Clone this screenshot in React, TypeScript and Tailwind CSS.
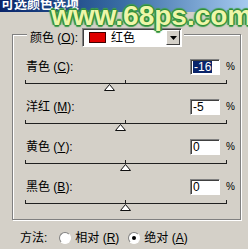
const rows = [
  { name: "青色", key: "C", value: -16, selected: true },
  { name: "洋红", key: "M", value: -5, selected: false },
  { name: "黄色", key: "Y", value: 0, selected: false },
  { name: "黑色", key: "B", value: 0, selected: false },
];

const font = "font-['Liberation_Sans','Noto_Sans_CJK_SC',sans-serif]";

function Slider({ value }: { value: number }) {
  // track runs 201px, -100..100
  const left = 100 + value;
  return (
    <div className="relative ml-[12px] mt-[8px] h-[16px] w-[202px]">
      <div className="h-px w-full bg-[#202020]" />
      <div className="absolute left-0 top-[-3px] h-[4px] w-px bg-[#202020]" />
      <div className="absolute left-[100px] top-[-3px] h-[4px] w-px bg-[#202020]" />
      <div className="absolute right-0 top-[-3px] h-[4px] w-px bg-[#202020]" />
      <svg
        className="absolute top-[1px]"
        style={{ left: left - 5 }}
        width="11"
        height="7"
        viewBox="0 0 11 7"
      >
        <path d="M5.5 0.5 L10.5 6.5 L0.5 6.5 Z" fill="#fff" stroke="#101010" strokeWidth="1" />
      </svg>
    </div>
  );
}

function Row({ name, keyChar, value, selected }: { name: string; keyChar: string; value: number; selected: boolean }) {
  return (
    <div className="flex h-[40px] flex-col">
      <div className="flex h-[16px] items-center">
        <span className="ml-[13px] text-[12px] leading-none text-black">
          {name} (<span className="underline">{keyChar}</span>):
        </span>
        <div className="ml-auto flex h-[16px] w-[30px] items-center border border-b-white border-l-[#808080] border-r-white border-t-[#808080] bg-white pl-[2px] shadow-[inset_1px_1px_0_#404040] text-[12px] leading-none">
          {selected ? (
            <span className="bg-[#0a246a] px-px text-white">{value}</span>
          ) : (
            <span className="text-black">{value}</span>
          )}
        </div>
        <span className="ml-[6px] mr-[5px] text-[10px] leading-none text-black">%</span>
      </div>
      <Slider value={value} />
    </div>
  );
}

export default function App() {
  return (
    <div className={`relative h-[249px] w-[248px] overflow-hidden bg-[#d4d0c8] ${font}`}>
      <div className="h-[12px] overflow-hidden bg-gradient-to-r from-[#0a246a] via-[#3a6ea5] to-[#a6caf0]">
        <div className="-mt-[3px] pl-[1px] text-[13px] font-bold leading-[14px] text-white">可选颜色选项</div>
      </div>

      <div className="ml-[12px] mt-[22px] h-[186px] w-[229px] border border-[#808080] shadow-[inset_1px_1px_0_#fff,1px_1px_0_#fff]">
        <div className="-mt-[7px] ml-[14px] flex w-fit items-center bg-[#d4d0c8] pl-[3px] pr-[2px]">
          <span className="text-[12px] leading-none text-black">
            颜色 (<span className="underline">O</span>):
          </span>
          <div className="ml-[4px] flex h-[19px] w-[100px] items-center border border-b-white border-l-[#808080] border-r-white border-t-[#808080] bg-white shadow-[inset_1px_1px_0_#404040]">
            <div className="ml-[6px] h-[11px] w-[17px] border border-[#400000] bg-[#e00000]" />
            <span className="ml-[5px] text-[12px] leading-none text-black">红色</span>
            <div className="ml-auto mr-px flex h-[15px] w-[14px] items-center justify-center border border-b-[#404040] border-l-white border-r-[#404040] border-t-white bg-[#d4d0c8]">
              <svg width="7" height="4" viewBox="0 0 7 4">
                <path d="M0 0 H7 L3.5 4 Z" fill="#000" />
              </svg>
            </div>
          </div>
        </div>

        <div className="mt-[12px] flex flex-col">
          {rows.map((r) => (
            <Row key={r.key} name={r.name} keyChar={r.key} value={r.value} selected={r.selected} />
          ))}
        </div>
      </div>

      <div className="ml-[20px] mt-[11px] flex h-[14px] items-center text-[12px] leading-none text-black">
        <span>方法:</span>
        <div className="ml-[12px] h-[12px] w-[12px] rounded-full border border-b-white border-l-[#808080] border-r-white border-t-[#808080] bg-white" />
        <span className="ml-[4px]">
          相对 (<span className="underline">R</span>)
        </span>
        <div className="ml-[9px] flex h-[12px] w-[12px] items-center justify-center rounded-full border border-b-white border-l-[#808080] border-r-white border-t-[#808080] bg-white">
          <div className="h-[4px] w-[4px] rounded-full bg-black" />
        </div>
        <span className="ml-[4px]">
          绝对 (<span className="underline">A</span>)
        </span>
      </div>

      {/* watermark over the dialog */}
      <div className="pointer-events-none absolute left-[51px] top-[1px] font-['Liberation_Sans',sans-serif] text-[28px] font-bold leading-[30px] text-[#eef6a8] [text-shadow:1px_0_0_#2f8a3a,-1px_0_0_#2f8a3a,0_1px_0_#2f8a3a,0_-1px_0_#2f8a3a,2px_0_1px_#3fa04a,-2px_0_1px_#3fa04a,0_2px_1px_#3fa04a,0_-2px_1px_#3fa04a]">
        www.68ps.com
      </div>
    </div>
  );
}
